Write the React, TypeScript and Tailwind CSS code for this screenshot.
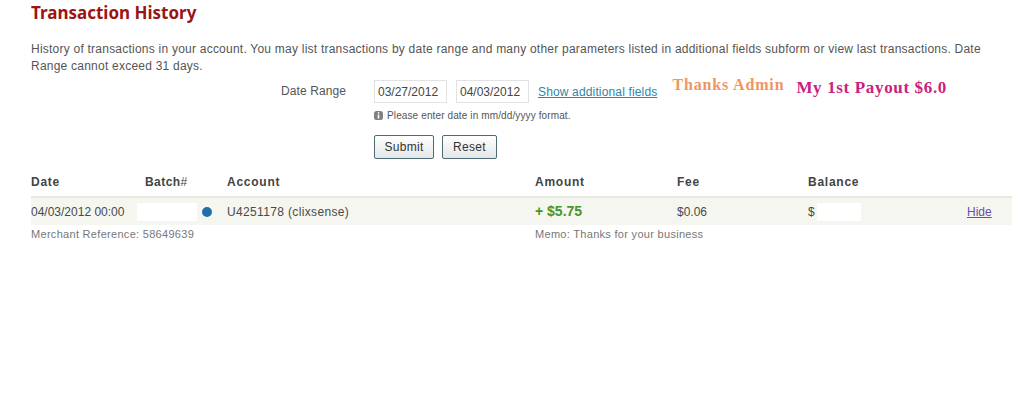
import React from 'react';

const sans = "font-['Liberation_Sans',Arial,sans-serif]";

function InfoIcon() {
  return (
    <svg width="9" height="9" viewBox="0 0 9 9" className="shrink-0">
      <rect width="9" height="9" rx="2.5" fill="#808080" />
      <rect x="3.7" y="1.2" width="1.6" height="1.4" fill="#fff" />
      <rect x="3.7" y="3.6" width="1.6" height="4" fill="#fff" />
    </svg>
  );
}

function DateInput({ value }: { value: string }) {
  return (
    <div className="w-[73px] h-[23px] border border-[#e2e2e2] bg-white flex items-center pl-[3px] text-[12px] text-[#444]">
      {value}
    </div>
  );
}

function FormButton({ label, width }: { label: string; width: string }) {
  return (
    <button className={`${width} h-[24px] border border-[#4f6a75] rounded-[2px] bg-gradient-to-b from-white to-[#e4e8e8] text-[12px] tracking-[0.3px] text-[#333] flex items-center justify-center`}>
      {label}
    </button>
  );
}

export default function App() {
  return (
    <div className={`${sans} w-[1023px] h-[415px] overflow-hidden bg-white pl-[31px] pt-[1px] text-[#444]`}>
      <h1 className="font-['Noto_Sans',sans-serif] font-bold text-[17px] leading-[23px] text-[#9b1414]">
        Transaction History
      </h1>

      <p className="mt-[17px] w-[960px] text-[12px] leading-[17px] tracking-[0.23px] text-[#555]">
        History of transactions in your account. You may list transactions by date range and many other parameters listed in additional fields subform or view last transactions. Date Range cannot exceed 31 days.
      </p>

      <div className="flex mt-[5px]">
        <div className="w-[343px] pr-[28px] pt-[3px] text-right text-[12px] leading-[17px] tracking-[0.1px] text-[#555]">
          Date Range
        </div>
        <div className="flex flex-col">
          <div className="flex items-center h-[23px]">
            <DateInput value="03/27/2012" />
            <div className="w-[9px]" />
            <DateInput value="04/03/2012" />
            <a className="ml-[9px] text-[12px] tracking-[0.15px] text-[#2f86a8] underline">Show additional fields</a>
            <span className="ml-[15px] -mt-[14px] font-['Liberation_Serif',serif] font-bold text-[16px] tracking-[0.85px] text-[#ee9662]">
              Thanks Admin
            </span>
            <span className="ml-[12px] -mt-[7px] font-['Liberation_Serif',serif] font-bold text-[17px] tracking-[0.65px] text-[#cc2080]">
              My 1st Payout $6.0
            </span>
          </div>
          <div className="flex items-center gap-[4px] mt-[6px] h-[12px] text-[10px] tracking-[0.12px] text-[#555]">
            <InfoIcon />
            <span>Please enter date in mm/dd/yyyy format.</span>
          </div>
          <div className="flex gap-[8px] mt-[14px]">
            <FormButton label="Submit" width="w-[60px]" />
            <FormButton label="Reset" width="w-[55px]" />
          </div>
        </div>
      </div>

      <div className="w-[981px] mt-[8px]">
        <div className="grid grid-cols-[114px_82px_308px_142px_131px_159px_45px] h-[31px] items-center border-b-2 border-[#e8eae0] text-[12px] font-bold tracking-[0.75px] text-[#444]">
          <div>Date</div>
          <div className="tracking-[0.45px]">Batch<span className="font-normal">#</span></div>
          <div>Account</div>
          <div>Amount</div>
          <div>Fee</div>
          <div>Balance</div>
          <div />
        </div>
        <div className="grid grid-cols-[114px_82px_308px_142px_131px_159px_45px] h-[27px] items-center bg-[#f5f6ef] text-[12px] text-[#4a4a4a]">
          <div className="whitespace-nowrap">04/03/2012 00:00</div>
          <div className="flex items-center h-full">
            <div className="w-[60px] h-[18px] -ml-[8px] bg-white" />
            <div className="ml-[5px] w-[10px] h-[10px] rounded-full bg-[#1f6fa8]" />
          </div>
          <div className="tracking-[0.35px]">U4251178 (clixsense)</div>
          <div className="font-bold text-[14px] text-[#45962a]">+ $5.75</div>
          <div>$0.06</div>
          <div className="flex items-center">
            <span>$</span>
            <div className="ml-[2px] w-[44px] h-[18px] bg-white" />
          </div>
          <a className="text-[12px] text-[#6a4fa8] underline">Hide</a>
        </div>
        <div className="grid grid-cols-[504px_1fr] mt-[1px] text-[11px] leading-[16px] tracking-[0.3px] text-[#777]">
          <div>Merchant Reference: 58649639</div>
          <div>Memo: Thanks for your business</div>
        </div>
      </div>
    </div>
  );
}
